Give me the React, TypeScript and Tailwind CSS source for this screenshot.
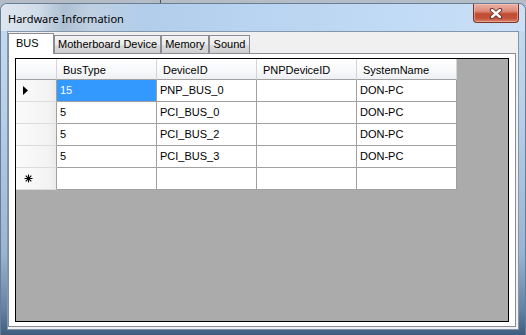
import React from "react";

const cols = ["BusType", "DeviceID", "PNPDeviceID", "SystemName"];
const rows = [
  ["15", "PNP_BUS_0", "", "DON-PC"],
  ["5", "PCI_BUS_0", "", "DON-PC"],
  ["5", "PCI_BUS_2", "", "DON-PC"],
  ["5", "PCI_BUS_3", "", "DON-PC"],
];

function CloseButton() {
  return (
    <div className="w-[46px] h-[19px] rounded-b-[4px] border border-t-0 border-[#7b3327] bg-[linear-gradient(180deg,#eab2a5_0%,#dd8a78_40%,#c24a34_55%,#c4543c_80%,#d9846a_100%)] flex items-center justify-center shadow-[inset_0_0_0_1px_rgba(255,210,200,0.45)]">
      <svg width="14" height="11" viewBox="0 0 14 11">
        <path d="M3 2 L11 9 M11 2 L3 9" stroke="#5b2a22" strokeWidth="4.2" strokeLinecap="round" />
        <path d="M3 2 L11 9 M11 2 L3 9" stroke="#ffffff" strokeWidth="2.4" strokeLinecap="round" />
      </svg>
    </div>
  );
}

function Arrow() {
  return (
    <svg width="5" height="9" viewBox="0 0 5 9">
      <path d="M0 0 L5 4.5 L0 9 Z" fill="#000" />
    </svg>
  );
}

function Star() {
  return (
    <svg width="9" height="9" viewBox="0 0 9 9">
      <path d="M4.5 0.5 V8.5 M0.5 4.5 H8.5 M1.7 1.7 L7.3 7.3 M7.3 1.7 L1.7 7.3" stroke="#000" strokeWidth="1.1" />
    </svg>
  );
}

export default function App() {
  return (
    <div
      className="w-[526px] h-[335px] overflow-hidden bg-[#b4bcc5] flex flex-col"
      style={{ fontFamily: '"Liberation Sans", Arial, sans-serif' }}
    >
      <div className="h-[3px] flex">
        <div className="w-[161px] border-r border-[#4c535a]" />
      </div>
      <div className="flex-1 flex flex-col rounded-t-[7px] border border-b-0 border-[#6a7d92] bg-[linear-gradient(180deg,#c8dcf0_0%,#b6cee7_35%,#9ab5d1_75%,#6483a5_92%,#3f5d7f_100%)] overflow-hidden">
        {/* Title bar */}
        <div className="h-[27px] flex items-start justify-between pl-[7px] pr-[6px] bg-[linear-gradient(90deg,#dde7f1_0%,#d0dce8_7%,#adc0d3_12%,#bfd0e2_17%,#b2cdea_27%,#b8d3f0_45%,#c1daf5_75%,#cbe0f7_100%)]">
          <span
            className="text-[11px] leading-none text-black mt-[9px]"
            style={{ fontFamily: '"Segoe UI", "Noto Sans", sans-serif' }}
          >
            Hardware Information
          </span>
          <CloseButton />
        </div>
        {/* Client */}
        <div className="mx-[6px] h-[299px] border border-[#8396ab] bg-[#f0f0f0] flex flex-col">
          <div className="mt-[1px] h-[20px] flex items-end text-[11px] text-black">
            <div className="relative z-10 -mb-px h-[21px] w-[46px] border border-b-0 border-[#898c95] bg-white flex items-center pl-[7px] pb-[1px]">
              BUS
            </div>
            <div className="h-[18px] w-[107px] border border-b-0 border-[#898c95] bg-[linear-gradient(180deg,#f3f3f3_0%,#ebebeb_50%,#dddddd_51%,#cfcfcf_100%)] flex items-center justify-center">
              Motherboard Device
            </div>
            <div className="h-[18px] w-[48px] border border-b-0 border-[#898c95] bg-[linear-gradient(180deg,#f3f3f3_0%,#ebebeb_50%,#dddddd_51%,#cfcfcf_100%)] flex items-center justify-center">
              Memory
            </div>
            <div className="h-[18px] w-[41px] border border-b-0 border-[#898c95] bg-[linear-gradient(180deg,#f3f3f3_0%,#ebebeb_50%,#dddddd_51%,#cfcfcf_100%)] flex items-center justify-center">
              Sound
            </div>
          </div>
          <div className="w-[508px] h-[274px] border border-[#898c95] bg-white pl-[6px] pt-[4px]">
            <div className="w-[494px] h-[264px] border border-black bg-[#ababab] flex flex-col text-[11px] text-black">
              {/* header */}
              <div className="flex h-[21px]">
                <div className="w-[41px] h-full border-r border-b border-r-[#d5d5d5] border-b-[#a0a0a0] bg-[linear-gradient(180deg,#ffffff_0%,#f7f8fa_60%,#eef0f3_100%)]" />
                {cols.map((c) => (
                  <div
                    key={c}
                    className="w-[100px] h-full border-r border-b border-r-[#d5d5d5] border-b-[#a0a0a0] bg-[linear-gradient(180deg,#ffffff_0%,#f7f8fa_60%,#eef0f3_100%)] flex items-center pl-[6px] pt-[2px]"
                  >
                    {c}
                  </div>
                ))}
              </div>
              {rows.map((r, i) => (
                <div key={i} className="flex h-[22px]">
                  <div className="w-[41px] h-full border-r border-b border-r-[#a0a0a0] border-b-[#dcdcdc] bg-[linear-gradient(90deg,#fbfbfb_0%,#f3f3f3_80%,#ebebeb_100%)] flex items-center pl-[7px]">
                    {i === 0 ? <Arrow /> : null}
                  </div>
                  {r.map((v, j) => (
                    <div
                      key={j}
                      className={
                        i === 0 && j === 0
                          ? "w-[100px] h-full border-r border-b border-[#a0a0a0] bg-[#3399ff] text-white flex items-center pl-[3px]"
                          : "w-[100px] h-full border-r border-b border-[#a0a0a0] bg-white flex items-center pl-[3px]"
                      }
                    >
                      {v}
                    </div>
                  ))}
                </div>
              ))}
              <div className="flex h-[22px]">
                <div className="w-[41px] h-full border-r border-b border-r-[#a0a0a0] border-b-[#dcdcdc] bg-[linear-gradient(90deg,#fbfbfb_0%,#f3f3f3_80%,#ebebeb_100%)] flex items-center pl-[8px]">
                  <Star />
                </div>
                {cols.map((c) => (
                  <div key={c} className="w-[100px] h-full border-r border-b border-[#a0a0a0] bg-white" />
                ))}
              </div>
            </div>
          </div>
        </div>
      </div>
    </div>
  );
}
